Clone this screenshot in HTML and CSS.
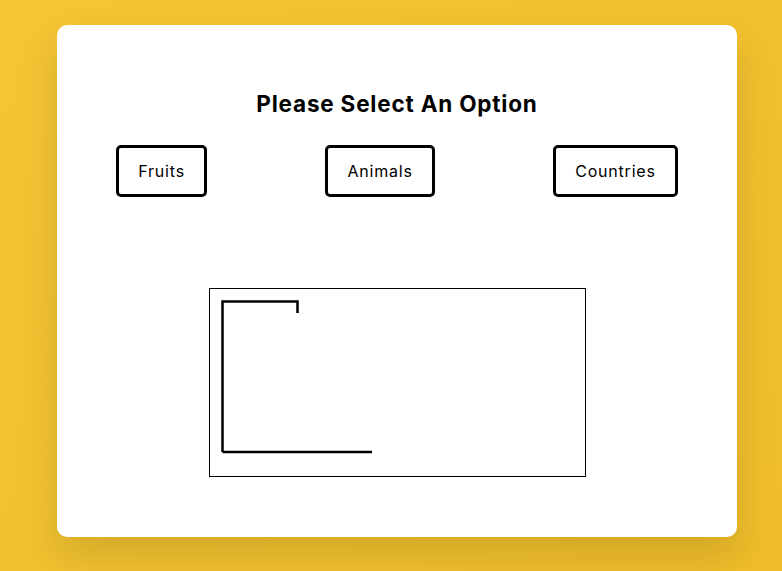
FILE: index.html
```html
<!DOCTYPE html>
<html>
<head>
<link rel="stylesheet" href="styles.css">
</head>
<body>

<div class="page">
  <div class="container">
    <h1 class="title">Please Select An Option</h1>
    <div class="options">
      <button class="option">Fruits</button>
      <button class="option">Animals</button>
      <button class="option">Countries</button>
    </div>
    <div class="board">
      <!-- gallows -->
      <svg width="375" height="187" viewBox="0 0 375 187">
        <polyline points="12.5,163 12.5,12.5 87.5,12.5 87.5,24" fill="none" stroke="#000" stroke-width="2.5"/>
        <line x1="12.5" y1="163" x2="162" y2="163" stroke="#000" stroke-width="2.5"/>
      </svg>
    </div>
  </div>
</div>

</body>
</html>
```

FILE: styles.css
```css
/* page background */
body {
  margin: 0;
  height: 571px;
  background: linear-gradient(135deg, #f4c534, #efbd2b);
  font-family: Inter, "Open Sans", sans-serif;
  overflow: hidden;
}

.page {
  display: flex;
  justify-content: center;
  padding: 25px 0 0 12px;
}

/* white card */
.container {
  width: 680px;
  height: 512px;
  box-sizing: border-box;
  padding-top: 64px;
  background-color: #fff;
  border-radius: 10px;
  box-shadow: 0 20px 40px rgba(0, 0, 0, 0.12);
  display: flex;
  flex-direction: column;
  align-items: center;
}

.title {
  margin: 0;
  font-size: 22.5px;
  line-height: 30px;
  letter-spacing: 0.8px;
  font-weight: 700;
  color: #000;
}

.options {
  width: 100%;
  margin-top: 26px;
  display: flex;
  justify-content: space-around;
}

.option {
  font-family: inherit;
  font-size: 16px;
  line-height: 24px;
  letter-spacing: 0.8px;
  padding: 11px 19px;
  background-color: #fff;
  color: #000;
  border: 3px solid #000;
  border-radius: 5px;
}

/* drawing area */
.board {
  margin-top: 91px;
  border: 1px solid #000;
  width: 375px;
  height: 187px;
}

.board svg {
  display: block;
}
```
